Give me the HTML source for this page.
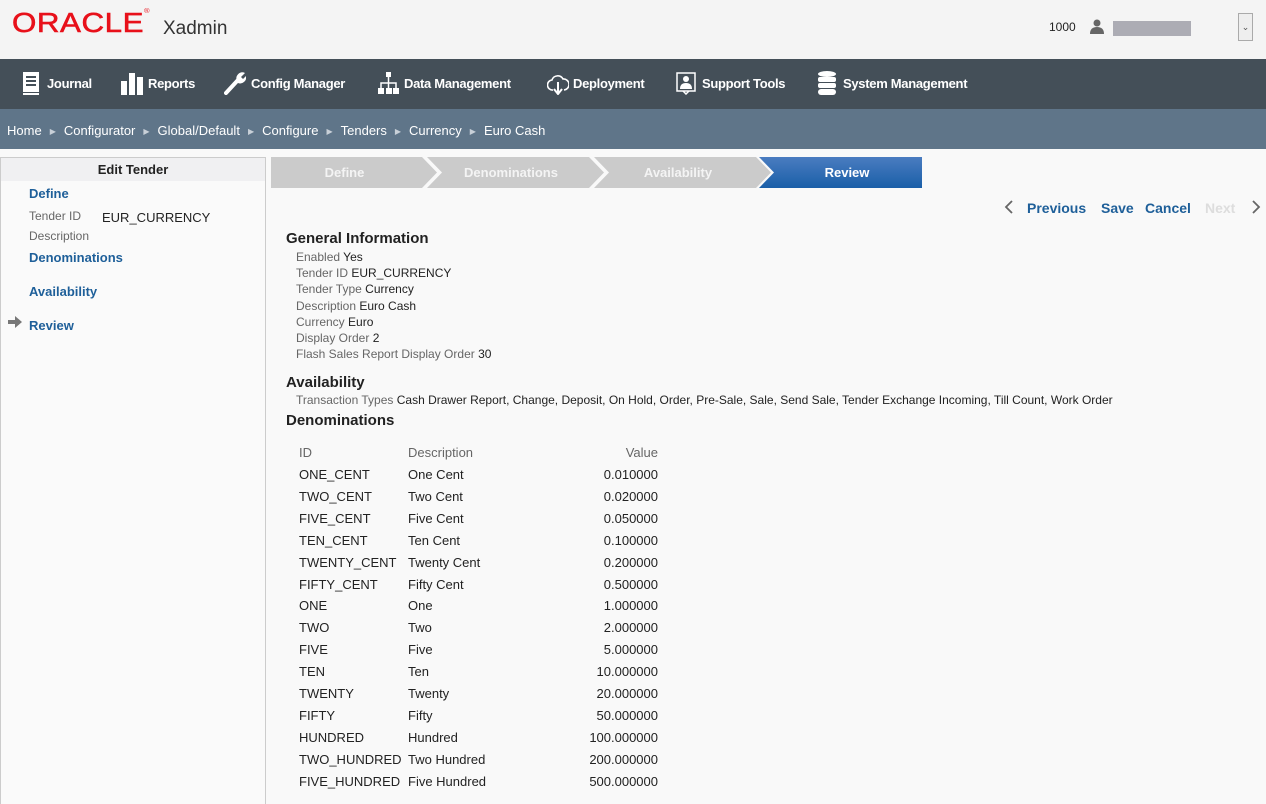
<!DOCTYPE html>
<html><head><style>
*{margin:0;padding:0;box-sizing:border-box}
body{width:1266px;height:804px;overflow:hidden;background:#f9f9f9;font-family:"Liberation Sans",sans-serif;font-size:13px;color:#222;position:relative}
.abs{position:absolute}
#hdr{left:0;top:0;width:1266px;height:59px;background:#f4f4f4}
#nav{left:0;top:59px;width:1266px;height:50px;background:#444f58;color:#fff;font-weight:bold;font-size:13px}
#nav span{position:absolute;top:17px;letter-spacing:-0.3px}
#bc{left:0;top:109px;width:1266px;height:40px;background:#5f7589;color:#fff;font-size:13px}
#side{left:0;top:157px;width:266px;height:647px;border:1px solid #ccc;border-bottom:none;background:#fafafa}
.lnk{color:#1e5f99;font-weight:bold;font-size:13px}
.lbl{color:#666;font-size:12px}
.step{top:157px;height:31px;color:#f4f4f4;font-weight:bold;font-size:13px;text-align:center;line-height:31px}
.r{position:absolute;font-size:13px}
.ar{font-size:8px;color:#c8d0d8;margin:0 8px 0 8px;vertical-align:1px}
</style></head><body>
<div id="hdr" class="abs">
 <div class="abs" style="left:12px;top:8px;color:#e8101a;font-size:29px;letter-spacing:0.5px;transform:scale(1.08,0.95);transform-origin:left top;-webkit-text-stroke:0.6px #e8101a">ORACLE<span style="font-size:7px;vertical-align:top;-webkit-text-stroke:0">®</span></div>
 <div class="abs" style="left:163px;top:18px;font-size:19px;color:#333">Xadmin</div>
 <div class="abs" style="left:1049px;top:20px;font-size:12px">1000</div>
 <svg class="abs" style="left:1090px;top:19px" width="14" height="15"><circle cx="7" cy="4" r="3.5" fill="#666"/><path d="M0 15 Q0 8 7 8 Q14 8 14 15Z" fill="#666"/></svg>
 <div class="abs" style="left:1113px;top:21px;width:78px;height:15px;background:#acacb4"></div>
 <div class="abs" style="left:1238px;top:13px;width:15px;height:28px;border:1px solid #aaa;background:#eee;font-size:9px;color:#555;text-align:center;line-height:26px">&#8964;</div>
</div>
<div id="nav" class="abs">
 <svg class="abs" style="left:22px;top:13px" width="18" height="23"><rect x="1" y="0" width="16" height="20" fill="#fff"/><rect x="4" y="4" width="10" height="2" fill="#444f58"/><rect x="4" y="8" width="10" height="2" fill="#444f58"/><rect x="4" y="12" width="10" height="2" fill="#444f58"/><rect x="1" y="21" width="16" height="2" fill="#fff"/></svg><span style="left:47px">Journal</span>
 <svg class="abs" style="left:121px;top:14px" width="22" height="22"><rect x="0" y="8" width="6" height="14" fill="#fff"/><rect x="8" y="0" width="6" height="22" fill="#fff"/><rect x="16" y="4" width="6" height="18" fill="#fff"/></svg><span style="left:148px">Reports</span>
 <svg class="abs" style="left:224px;top:12px" width="22" height="24"><path d="M2 22 L14 9" stroke="#fff" stroke-width="4" stroke-linecap="round"/><path d="M13 10 A6 6 0 0 1 21 2 L17 6 L19 8 L22 5 A6 6 0 0 1 14 12Z" fill="#fff"/></svg><span style="left:251px">Config Manager</span>
 <svg class="abs" style="left:378px;top:13px" width="21" height="22"><rect x="8" y="0" width="5" height="5" fill="#fff"/><path d="M10.5 5V10M3 16V11H18V16M10.5 10V16" stroke="#fff" stroke-width="1.5" fill="none"/><rect x="0" y="16" width="6" height="6" fill="#fff"/><rect x="8" y="16" width="6" height="6" fill="#fff"/><rect x="15" y="16" width="6" height="6" fill="#fff"/></svg><span style="left:404px">Data Management</span>
 <svg class="abs" style="left:547px;top:14px" width="22" height="22"><path d="M6 17 A5 5 0 0 1 5 7 A6 6 0 0 1 16 6 A5 5 0 0 1 17 17" stroke="#fff" stroke-width="1.6" fill="none"/><path d="M11 9V20M7 16L11 21L15 16" stroke="#fff" stroke-width="2" fill="none"/></svg><span style="left:573px">Deployment</span>
 <svg class="abs" style="left:676px;top:13px" width="20" height="23"><rect x="1" y="1" width="18" height="18" stroke="#fff" stroke-width="1.5" fill="none"/><circle cx="10" cy="7" r="3" fill="#fff"/><path d="M4 17Q4 11 10 11Q16 11 16 17Z" fill="#fff"/><path d="M7 19L10 22L13 19" stroke="#fff" stroke-width="1.5" fill="none"/></svg><span style="left:702px">Support Tools</span>
 <svg class="abs" style="left:818px;top:12px" width="18" height="25"><ellipse cx="9" cy="3" rx="9" ry="3" fill="#fff"/><rect x="0" y="6" width="18" height="5" rx="2" fill="#fff"/><rect x="0" y="12" width="18" height="5" rx="2" fill="#fff"/><rect x="0" y="18" width="18" height="6" rx="3" fill="#fff"/></svg><span style="left:843px">System Management</span>
</div>
<div id="bc" class="abs"><div class="abs" style="left:7px;top:14px;white-space:nowrap">Home<span class="ar">&#9654;</span>Configurator<span class="ar">&#9654;</span>Global/Default<span class="ar">&#9654;</span>Configure<span class="ar">&#9654;</span>Tenders<span class="ar">&#9654;</span>Currency<span class="ar">&#9654;</span>Euro Cash</div></div>
<div id="side" class="abs">
 <div style="height:23px;background:#f0f0f2;text-align:center;font-weight:bold;line-height:24px;font-size:13px">Edit Tender</div>
 <div class="abs lnk" style="left:28px;top:28px">Define</div>
 <div class="abs lbl" style="left:28px;top:51px">Tender ID</div>
 <div class="abs" style="left:101px;top:52px">EUR_CURRENCY</div>
 <div class="abs lbl" style="left:28px;top:71px">Description</div>
 <div class="abs lnk" style="left:28px;top:92px">Denominations</div>
 <div class="abs lnk" style="left:28px;top:126px">Availability</div>
 <svg class="abs" style="left:7px;top:158px" width="14" height="12"><path d="M0 4H7V0L14 6L7 12V8H0Z" fill="#777"/></svg>
 <div class="abs lnk" style="left:28px;top:160px">Review</div>
</div>
<svg class="abs" style="left:271px;top:157px" width="652" height="31">
 <defs><linearGradient id="g" x1="0" y1="0" x2="0" y2="1"><stop offset="0" stop-color="#4a7cc0"/><stop offset="1" stop-color="#1a5fa8"/></linearGradient></defs>
 <polygon points="0,0 151,0 166,15.5 151,31 0,31" fill="#cbcbcb"/>
 <polygon points="156,0 318,0 333,15.5 318,31 156,31 171,15.5" fill="#cbcbcb"/>
 <polygon points="323,0 485,0 500,15.5 485,31 323,31 338,15.5" fill="#cbcbcb"/>
 <polygon points="488,0 651,0 651,31 488,31 503,15.5" fill="url(#g)"/>
</svg>
<div class="abs step" style="left:271px;width:147px">Define</div>
<div class="abs step" style="left:437px;width:148px">Denominations</div>
<div class="abs step" style="left:604px;width:148px">Availability</div>
<div class="abs step" style="left:772px;width:150px;color:#fff">Review</div>
<svg class="abs" style="left:1004px;top:200px" width="10" height="14"><path d="M8 1L2 7L8 13" stroke="#666" stroke-width="1.8" fill="none"/></svg>
<div class="abs lnk" style="left:1027px;top:200px;font-size:14px">Previous</div>
<div class="abs lnk" style="left:1101px;top:200px;font-size:14px">Save</div>
<div class="abs lnk" style="left:1145px;top:200px;font-size:14px">Cancel</div>
<div class="abs" style="left:1205px;top:200px;font-size:14px;font-weight:bold;color:#ddd">Next</div>
<svg class="abs" style="left:1251px;top:200px" width="10" height="14"><path d="M2 1L8 7L2 13" stroke="#666" stroke-width="1.8" fill="none"/></svg>
<div class="abs" style="left:286px;top:230px;font-weight:bold;font-size:15px">General Information</div>
<div class="abs" style="left:296px;top:249px;line-height:16.2px;font-size:12px">
<span class="lbl">Enabled</span> Yes<br><span class="lbl">Tender ID</span> EUR_CURRENCY<br><span class="lbl">Tender Type</span> Currency<br><span class="lbl">Description</span> Euro Cash<br><span class="lbl">Currency</span> Euro<br><span class="lbl">Display Order</span> 2<br><span class="lbl">Flash Sales Report Display Order</span> 30</div>
<div class="abs" style="left:286px;top:374px;font-weight:bold;font-size:15px">Availability</div>
<div class="abs" style="left:296px;top:393px;font-size:12px;white-space:nowrap"><span class="lbl">Transaction Types</span> Cash Drawer Report, Change, Deposit, On Hold, Order, Pre-Sale, Sale, Send Sale, Tender Exchange Incoming, Till Count, Work Order</div>
<div class="abs" style="left:286px;top:412px;font-weight:bold;font-size:15px">Denominations</div>
<div class="r lbl" style="left:299px;top:445px;font-size:13px">ID</div>
<div class="r lbl" style="left:408px;top:445px;font-size:13px">Description</div>
<div class="r lbl" style="left:558px;width:100px;text-align:right;top:445px;font-size:13px">Value</div>
<div id="rows"></div>
<script>
var d=[["ONE_CENT","One Cent","0.010000"],["TWO_CENT","Two Cent","0.020000"],["FIVE_CENT","Five Cent","0.050000"],["TEN_CENT","Ten Cent","0.100000"],["TWENTY_CENT","Twenty Cent","0.200000"],["FIFTY_CENT","Fifty Cent","0.500000"],["ONE","One","1.000000"],["TWO","Two","2.000000"],["FIVE","Five","5.000000"],["TEN","Ten","10.000000"],["TWENTY","Twenty","20.000000"],["FIFTY","Fifty","50.000000"],["HUNDRED","Hundred","100.000000"],["TWO_HUNDRED","Two Hundred","200.000000"],["FIVE_HUNDRED","Five Hundred","500.000000"]];
var h="";d.forEach(function(r,i){var y=467+i*21.9;h+='<div class="r" style="left:299px;top:'+y+'px">'+r[0]+'</div><div class="r" style="left:408px;top:'+y+'px">'+r[1]+'</div><div class="r" style="left:538px;width:120px;text-align:right;top:'+y+'px">'+r[2]+'</div>';});
document.getElementById("rows").innerHTML=h;
</script>
</body></html>
